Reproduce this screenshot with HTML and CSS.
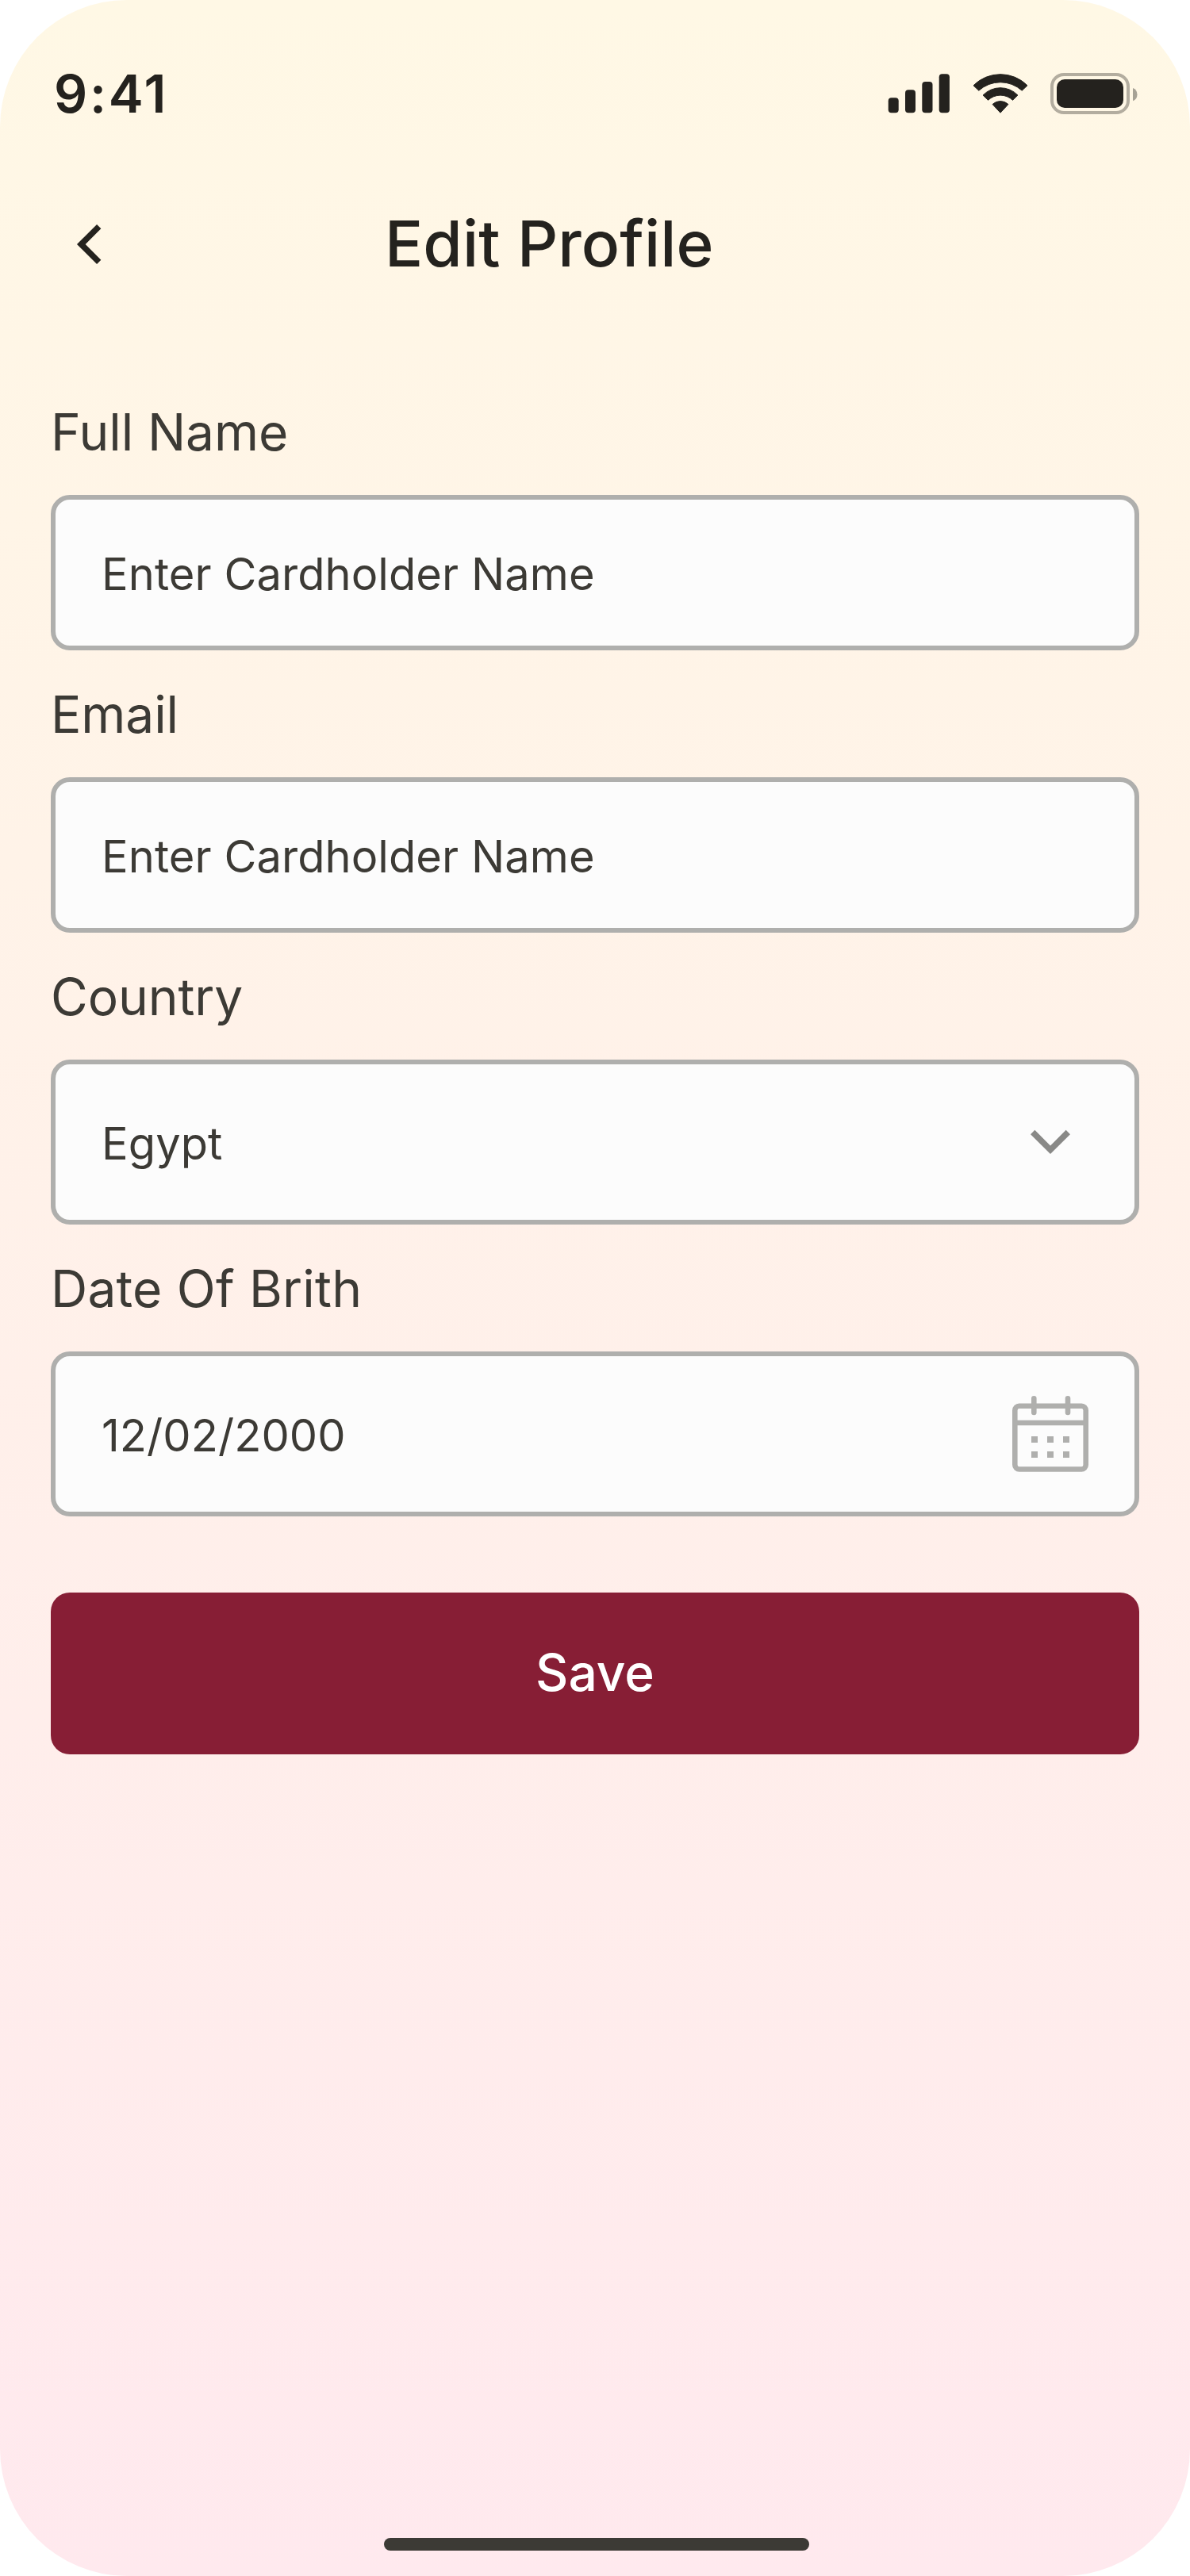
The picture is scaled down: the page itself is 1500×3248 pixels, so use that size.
FILE: index.html
```html
<!DOCTYPE html>
<html lang="en">
<head>
<meta charset="utf-8">
<title>Edit Profile</title>
<link rel="stylesheet" href="styles.css">
</head>
<body>
<main class="screen">
  <div class="status-bar">
    <span class="time">9:41</span>
    <div class="status-icons">
      <svg class="signal" viewBox="0 0 78 50" fill="currentColor">
        <rect x="-0.3" y="30.200" width="13" height="19" rx="4"/>
        <rect x="21" y="20.200" width="13" height="29" rx="4"/>
        <rect x="42.300" y="10" width="13.200" height="39.200" rx="4"/>
        <rect x="63.700" y="0.200" width="13.200" height="49" rx="4"/>
      </svg>
      <svg class="wifi" viewBox="0 0 70 50" fill="currentColor" stroke="currentColor" stroke-width="1" stroke-linejoin="round">
        <path d="M1 14.800A48 48 0 0 1 69 14.800L62.200 21.200A40.600 40.600 0 0 0 7.800 21.200Z"/>
        <path d="M13.100 27A30.500 30.500 0 0 1 56.900 27L50.500 33.300A22.500 22.500 0 0 0 19.500 33.300Z"/>
        <path d="M25.100 38.500A14.500 14.500 0 0 1 44.900 38.500L35 49.200Z"/>
      </svg>
      <svg class="battery" viewBox="0 0 110 52" fill="currentColor">
        <rect x="2" y="2" width="96" height="48" rx="15" fill="none" stroke="currentColor" stroke-width="4" opacity="0.35"/>
        <rect x="8" y="8" width="84" height="36" rx="10"/>
        <path d="M104 19a8.800 8.800 0 0 1 0 16.300Z" opacity="0.4"/>
      </svg>
    </div>
  </div>

  <header class="header">
    <svg class="icon" viewBox="0 0 96 96" fill="none" stroke="currentColor" stroke-width="7.5">
      <path d="M60.700 25.700L38.300 48L60.700 70.300"/>
    </svg>
    <h1 class="title">Edit Profile</h1>
  </header>

  <form class="form">
    <div class="label">Full Name</div>
    <div class="field">Enter Cardholder Name</div>
    <div class="label">Email</div>
    <div class="field">Enter Cardholder Name</div>
    <div class="label">Country</div>
    <div class="field field-tall">
      <span class="value">Egypt</span>
      <svg class="icon chevron" viewBox="0 0 96 96" fill="none" stroke="currentColor" stroke-width="7.5">
        <path d="M25.700 35.500L48 57.800L70.300 35.500"/>
      </svg>
    </div>
    <div class="label label-date">Date Of Brith</div>
    <div class="field field-tall">
      <span class="value">12/02/2000</span>
      <svg class="icon calendar" viewBox="0 0 96 96" fill="none" stroke="currentColor" stroke-width="6.6">
        <rect x="3.3" y="12.700" width="89.400" height="79.800" rx="5.500"/>
        <path d="M3 34H93"/>
        <path d="M27.300 3.300V20.900M70 3.300V20.900" stroke-linecap="round"/>
        <path d="M24 55h8m12 0h8m12 0h8M24 74h8m12 0h8m12 0h8" stroke-width="8"/>
      </svg>
    </div>
    <button class="save" type="button">Save</button>
  </form>

  <div class="home-indicator"></div>
</main>
</body>
</html>
```
FILE: styles.css
```css
* {
  box-sizing: border-box;
}

body {
  margin: 0;
  background: #fff;
  font-family: Inter, "Liberation Sans", sans-serif;
  color: #24221e;
}

.screen {
  display: flex;
  flex-direction: column;
  width: 1500px;
  height: 3248px;
  padding-bottom: 32px;
  border-radius: 160px;
  background: linear-gradient(180deg, #fff8e5 0%, #ffe9ee 100%);
}

.status-bar {
  display: flex;
  justify-content: space-between;
  align-items: center;
  height: 236px;
  padding: 0 66px 0 68px;
}

.time {
  font-size: 66px;
  font-weight: 600;
  line-height: 80px;
  letter-spacing: 2.8px;
}

.status-icons {
  display: flex;
  align-items: center;
  gap: 28px;
}

.signal {
  width: 78px;
  height: 50px;
  overflow: visible;
}

.wifi {
  width: 70px;
  height: 50px;
}

.battery {
  width: 110px;
  height: 52px;
}

.header {
  display: flex;
  align-items: center;
  gap: 325px;
  height: 144px;
  padding: 0 64px;
}

.icon {
  flex: none;
  width: 96px;
  height: 96px;
}

.title {
  margin: 0;
  padding-bottom: 2px;
  font-size: 80px;
  font-weight: 500;
  line-height: 120px;
  letter-spacing: 0.1px;
}

.form {
  display: flex;
  flex-direction: column;
  gap: 32px;
  padding: 116px 64px 0;
}

.label {
  height: 96px;
  padding-top: 1px;
  color: #3c3a35;
  font-size: 64px;
  line-height: 96px;
  letter-spacing: -0.1px;
}

.label-date {
  letter-spacing: 0.2px;
}

.field {
  display: flex;
  justify-content: space-between;
  align-items: center;
  height: 196px;
  padding: 4px 58px 0;
  border: 6px solid #afafad;
  border-radius: 24px;
  background: #fcfcfc;
  color: #3c3a35;
  font-size: 56px;
  letter-spacing: 0.07px;
}

.field-tall {
  height: 208px;
  padding-top: 0;
}

.value {
  padding-top: 3px;
}

.chevron {
  color: #898987;
}

.calendar {
  color: #afafad;
}

.save {
  height: 204px;
  margin-top: 64px;
  padding: 0 0 3px;
  border: 0;
  border-radius: 24px;
  background: #871e35;
  color: #fff;
  font-family: inherit;
  font-size: 64px;
  font-weight: 500;
}

.home-indicator {
  width: 536px;
  height: 16px;
  margin: auto 0 0 484px;
  border-radius: 8px;
  background: #3c3a35;
}
```
